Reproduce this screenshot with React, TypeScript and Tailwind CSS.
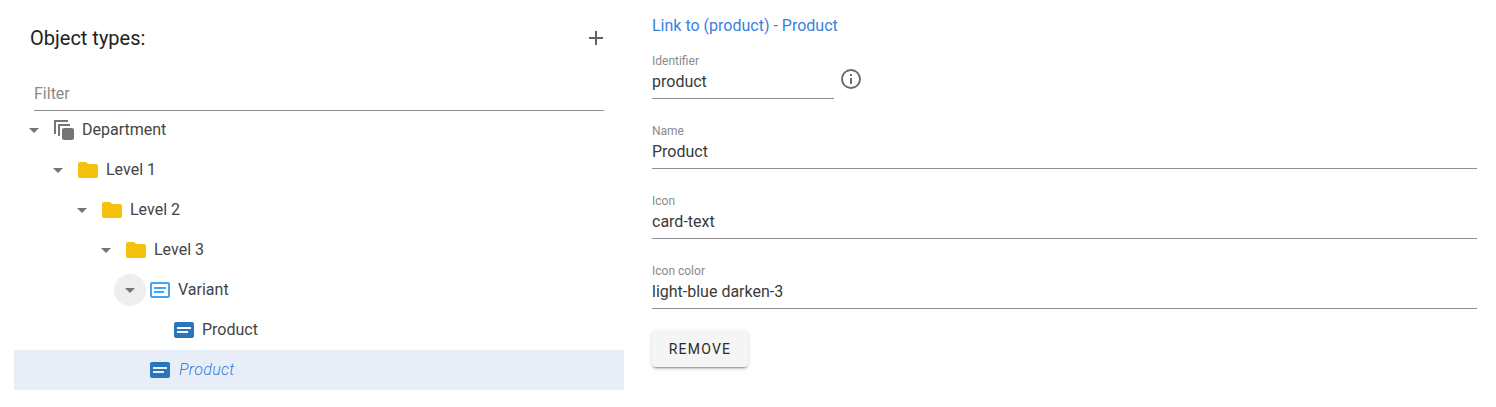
import React from "react";

const P = {
  plus: "M19,13H13V19H11V13H5V11H11V5H13V11H19V13Z",
  folder: "M10,4H4C2.89,4 2,4.89 2,6V18A2,2 0 0,0 4,20H20A2,2 0 0,0 22,18V8C22,6.89 21.1,6 20,6H12L10,4Z",
  card: "M20,20H4A2,2 0 0,1 2,18V6A2,2 0 0,1 4,4H20A2,2 0 0,1 22,6V18A2,2 0 0,1 20,20M5,13V15H16V13H5M5,9V11H19V9H5Z",
  cardOutline: "M20,20H4A2,2 0 0,1 2,18V6A2,2 0 0,1 4,4H20A2,2 0 0,1 22,6V18A2,2 0 0,1 20,20M4,6V18H20V6H4M6,9H18V11H6V9M6,13H16V15H6V13Z",
  caret: "M7,10L12,15L17,10H7Z",
  info: "M11,9H13V7H11M12,20C7.59,20 4,16.41 4,12C4,7.59 7.59,4 12,4C16.41,4 20,7.59 20,12C20,16.41 16.41,20 12,20M12,2A10,10 0 0,0 2,12A10,10 0 0,0 12,22A10,10 0 0,0 22,12A10,10 0 0,0 12,2M11,17H13V11H11V17Z",
  multi: "M2,2H16V4H4V16H2V2M6,6H18V8H8V18H6V6M12,10H20A2,2 0 0,1 22,12V20A2,2 0 0,1 20,22H12A2,2 0 0,1 10,20V12A2,2 0 0,1 12,10Z",
};

function Icon({ d, className }: { d: string; className: string }) {
  return (
    <svg viewBox="0 0 24 24" className={`w-6 h-6 shrink-0 ${className}`} fill="currentColor">
      <path d={d} />
    </svg>
  );
}

function Row({
  level,
  caret,
  hover,
  icon,
  iconClass,
  label,
  selected,
}: {
  level: number;
  caret: boolean;
  hover?: boolean;
  icon: string;
  iconClass: string;
  label: string;
  selected?: boolean;
}) {
  const pad = ["pl-[4px]", "pl-[28px]", "pl-[52px]", "pl-[76px]", "pl-[100px]", "pl-[124px]"][level];
  return (
    <div className={`h-10 flex items-center ${pad} ${selected ? "bg-[#e7eef8]" : ""}`}>
      <div className={`w-8 h-8 rounded-full flex items-center justify-center shrink-0 ${hover ? "bg-[#eeeeee]" : ""}`}>
        {caret && <Icon d={P.caret} className="text-[#757575]" />}
      </div>
      <Icon d={icon} className={`ml-[2px] ${iconClass}`} />
      <span className={`text-base ${selected ? "ml-[7px] italic font-light tracking-[0.3px] text-[#3a7fdc]" : "ml-[6px] text-[#444444]"}`}>{label}</span>
    </div>
  );
}

function Field({ label, value, narrow }: { label: string; value: string; narrow?: boolean }) {
  return (
    <div className={`h-[46px] border-b border-[#8f8f8f] ${narrow ? "w-[182px]" : "w-full"}`}>
      <div className="text-xs leading-[14px] pt-[1px] text-[#8a8a8a]">{label}</div>
      <div className="text-base leading-[24px] mt-[2px] text-[#3a3a3a]">{value}</div>
    </div>
  );
}

export default function App() {
  return (
    <div className="w-[1496px] h-[407px] bg-white flex font-['Roboto',sans-serif] overflow-hidden">
      <div className="ml-[14px] w-[610px] shrink-0">
        <div className="flex items-center justify-between pl-4 pr-[16px] pt-[22px] h-[54px]">
          <h2 className="text-xl leading-8 text-[#222222]">Object types:</h2>
          <Icon d={P.plus} className="text-[#616161]" />
        </div>
        <div className="mx-5 mt-[25px] -mb-px h-[32px] border-b border-[#8f8f8f] text-base leading-6 text-[#8a8a8a] pt-[3px]">Filter</div>
        <Row level={0} caret icon={P.multi} iconClass="text-[#757575]" label="Department" />
        <Row level={1} caret icon={P.folder} iconClass="text-[#f6c10a]" label="Level 1" />
        <Row level={2} caret icon={P.folder} iconClass="text-[#f6c10a]" label="Level 2" />
        <Row level={3} caret icon={P.folder} iconClass="text-[#f6c10a]" label="Level 3" />
        <Row level={4} caret hover icon={P.cardOutline} iconClass="text-[#42a5f5]" label="Variant" />
        <Row level={5} caret={false} icon={P.card} iconClass="text-[#2a75bb]" label="Product" />
        <Row level={4} caret={false} selected icon={P.card} iconClass="text-[#2a75bb]" label="Product" />
      </div>
      <div className="ml-[28px] w-[825px] shrink-0">
        <div className="pt-[14px] text-base leading-6 text-[#3a7fdc]">Link to (product) - Product</div>
        <div className="mt-[15px] flex items-start">
          <Field label="Identifier" value="product" narrow />
          <Icon d={P.info} className="ml-[5px] mt-[14px] text-[#6b6b6b]" />
        </div>
        <div className="mt-6 flex flex-col gap-6">
          <Field label="Name" value="Product" />
          <Field label="Icon" value="card-text" />
          <Field label="Icon color" value="light-blue darken-3" />
        </div>
        <button className="mt-[22px] h-9 w-24 rounded bg-[#f5f5f5] text-sm font-normal uppercase tracking-[1.25px] text-[#2b2b2b] shadow-[0_3px_1px_-2px_rgba(0,0,0,0.2),0_2px_2px_0_rgba(0,0,0,0.14),0_1px_5px_0_rgba(0,0,0,0.12)]">
          Remove
        </button>
      </div>
    </div>
  );
}
